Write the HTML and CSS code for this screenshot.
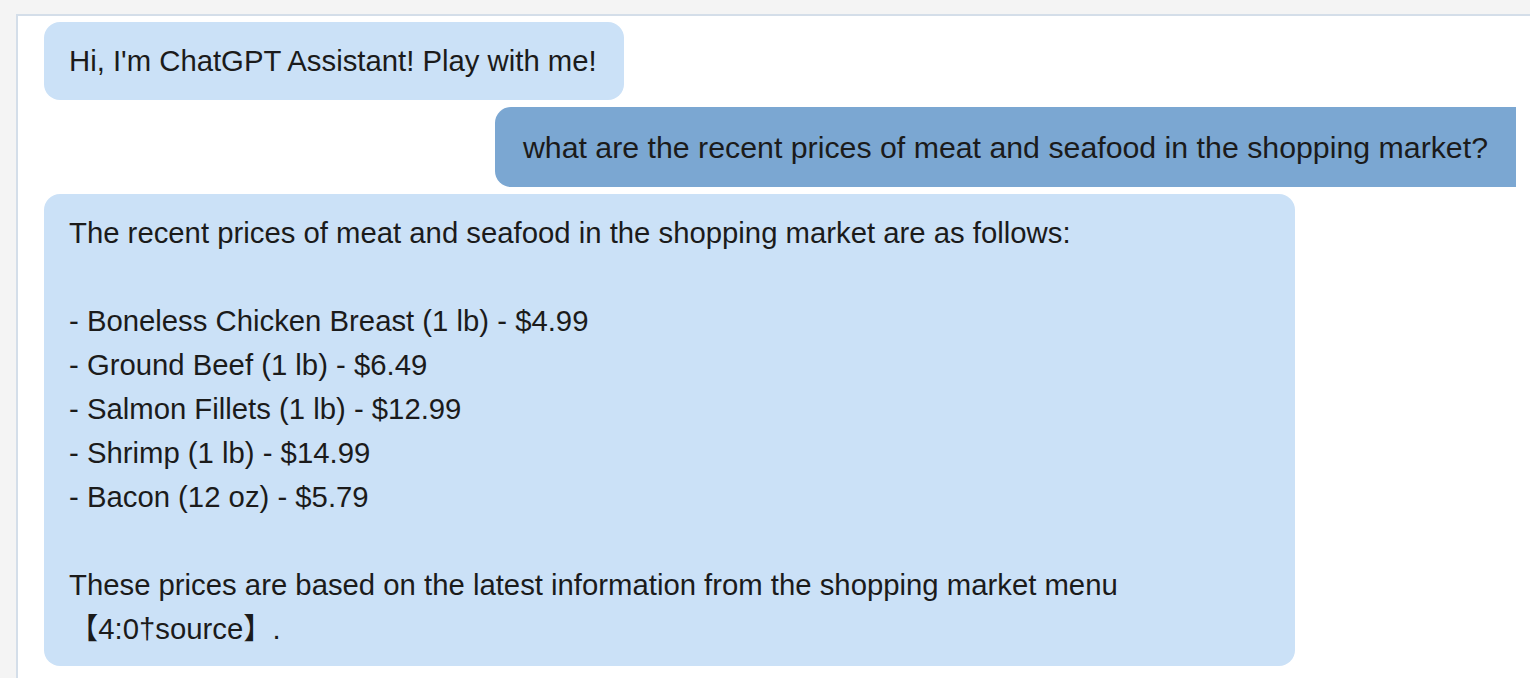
FILE: index.html
```html
<!DOCTYPE html>
<html lang="en">
<head>
<meta charset="utf-8">
<title>ChatGPT Assistant</title>
<link rel="stylesheet" href="styles.css">
</head>
<body>
<div class="chat">
  <div class="msg bot"><div class="bubble">Hi, I'm ChatGPT Assistant! Play with me!</div></div>
  <div class="msg user"><div class="bubble">what are the recent prices of meat and seafood in the shopping market?</div></div>
  <div class="msg bot"><div class="bubble long">The recent prices of meat and seafood in the shopping market are as follows:

- Boneless Chicken Breast (1 lb) - $4.99
- Ground Beef (1 lb) - $6.49
- Salmon Fillets (1 lb) - $12.99
- Shrimp (1 lb) - $14.99
- Bacon (12 oz) - $5.79

These prices are based on the latest information from the shopping market menu【4:0†source】.</div></div>
</div>
</body>
</html>
```

FILE: styles.css
```css
html, body {
  margin: 0;
  padding: 0;
  background: #f4f4f4;
  height: 100%;
  overflow: hidden;
}

body {
  font-family: "Liberation Sans", Arial, "Noto Sans CJK SC", sans-serif;
  color: #1b1b1b;
}

.chat {
  margin: 14px 0 0 16px;
  background: #ffffff;
  border-top: 2px solid #d4dee9;
  border-left: 2px solid #d4dee9;
  padding: 6px 14px 20px 26px;
  min-height: 700px;
  display: flex;
  flex-direction: column;
  gap: 7px;
}

.msg {
  display: flex;
}

.msg.user {
  justify-content: flex-end;
}

.bubble {
  white-space: pre-wrap;
  border-radius: 16px;
}

.bot .bubble {
  background: #cbe1f7;
  font-size: 29.3px;
  line-height: 44px;
  padding: 17px 27px 17px 25px;
  max-width: 1199px;
}

.bot .bubble.long {
  padding-bottom: 15px;
}

.user .bubble {
  background: #7ba7d2;
  font-size: 30.3px;
  line-height: 45px;
  padding: 18px 28px 17px 28px;
  border-radius: 16px 0 0 16px;
}
```
